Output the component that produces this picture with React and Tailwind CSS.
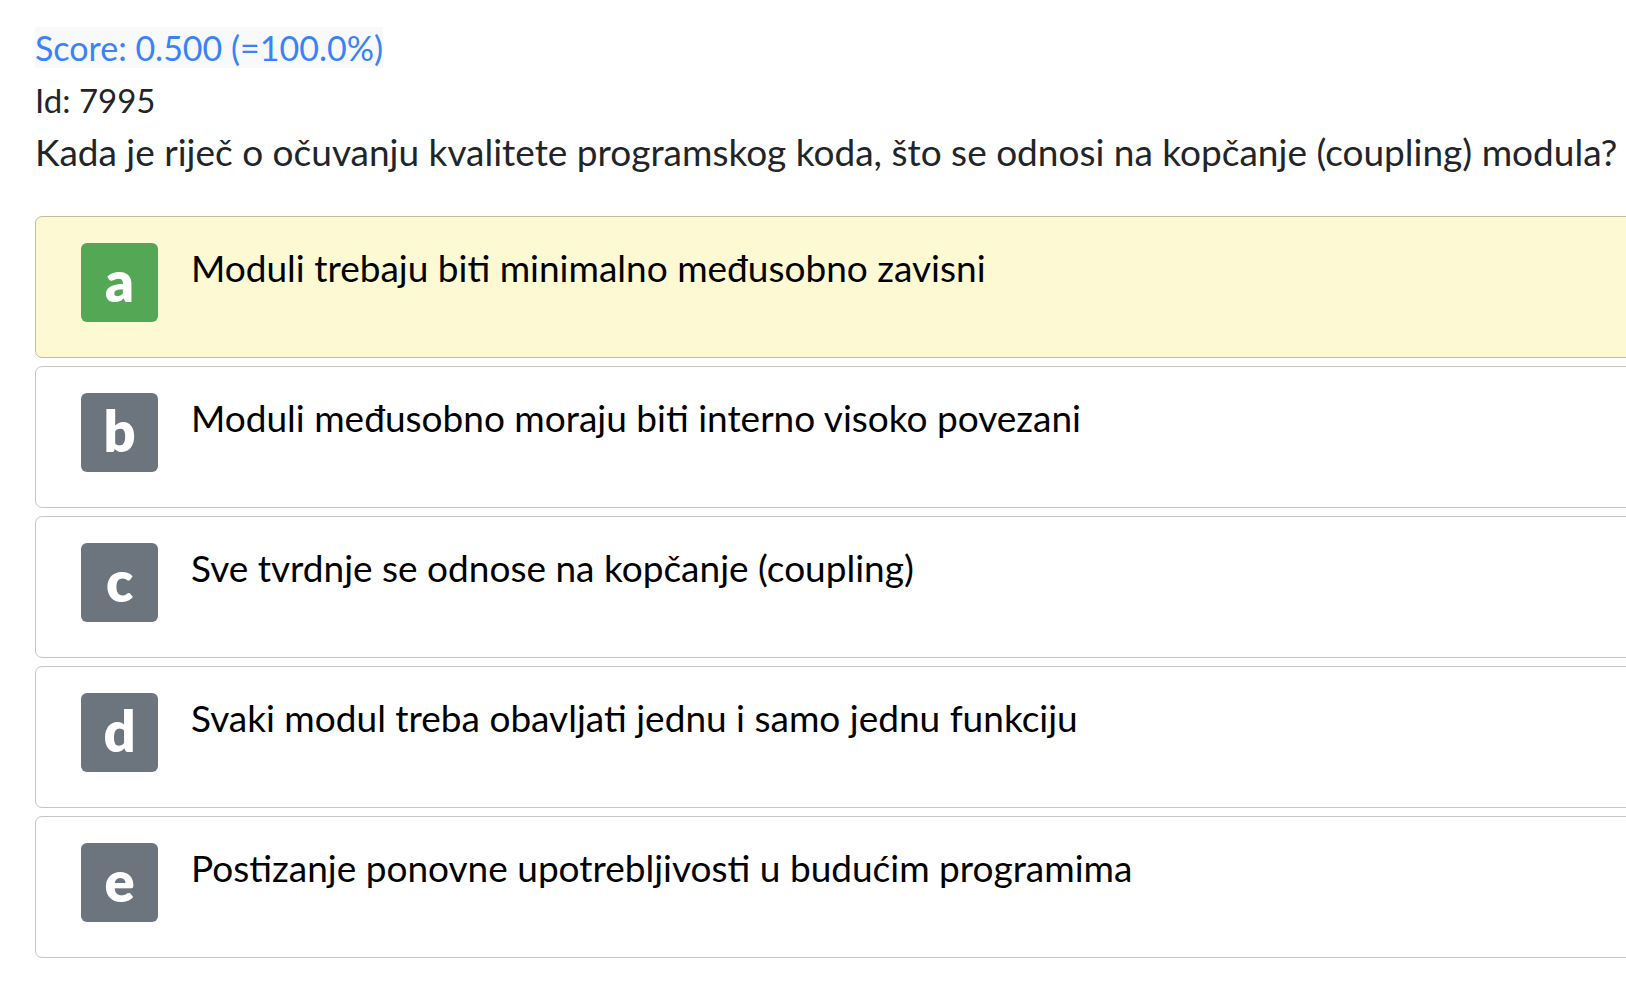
import React from "react";

const answers = [
  { l: "a", t: "Moduli trebaju biti minimalno međusobno zavisni", sel: true },
  { l: "b", t: "Moduli međusobno moraju biti interno visoko povezani" },
  { l: "c", t: "Sve tvrdnje se odnose na kopčanje (coupling)" },
  { l: "d", t: "Svaki modul treba obavljati jednu i samo jednu funkciju" },
  { l: "e", t: "Postizanje ponovne upotrebljivosti u budućim programima" },
];

export default function App() {
  return (
    <div
      className="w-[1626px] h-[984px] overflow-hidden bg-white pl-[35px] pt-[22px]"
      style={{ fontFamily: "Lato, 'Open Sans', sans-serif" }}
    >
      <div className="text-[37px] leading-[52px] text-[#212529]">
        <div className="text-[34px]">
          <span className="bg-[#f8f9fa] text-[#3b82f6]">Score: 0.500 (=100.0%)</span>
        </div>
        <div className="text-[33px]">Id: 7995</div>
        <div className="whitespace-nowrap">
          Kada je riječ o očuvanju kvalitete programskog koda, što se odnosi na kopčanje (coupling) modula?
        </div>
      </div>
      <div className="mt-[38px] flex flex-col gap-[8px]">
        {answers.map((a) => (
          <div
            key={a.l}
            className={
              "w-[1620px] h-[142px] box-border rounded-[7px] border flex items-start pl-[45px] pt-[26px] gap-[33px] " +
              (a.sel ? "bg-[#fdf9d3] border-[#c4bd97]" : "bg-white border-[#c6c6c6]")
            }
          >
            <div
              className={
                "w-[77px] h-[79px] shrink-0 rounded-[6px] flex items-center justify-center text-white font-extrabold text-[56px] leading-none pb-[4px] " +
                (a.sel ? "bg-[#54a754]" : "bg-[#6c757d]")
              }
            >
              {a.l}
            </div>
            <div className="text-[37px] leading-[52px] text-black whitespace-nowrap -mt-[1px]">{a.t}</div>
          </div>
        ))}
      </div>
    </div>
  );
}
